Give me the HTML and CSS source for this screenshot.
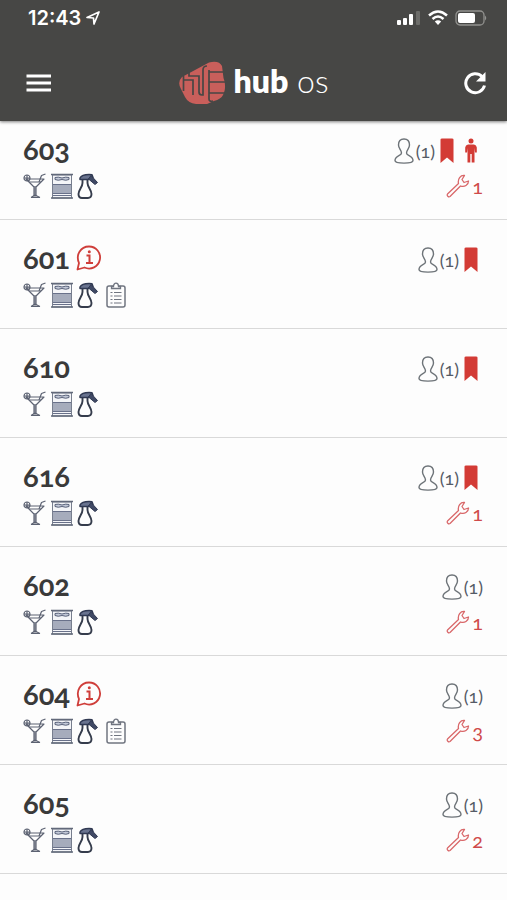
FILE: index.html
```
<!doctype html>
<html lang="en">
  <head>
    <meta charset="UTF-8" />
    <meta name="viewport" content="width=device-width, initial-scale=1" />
    <title>hub os</title>
    <link rel="stylesheet" href="styles.css">
  </head>
  <body>
    <!-- icon set -->
    <svg class="sprite" width="0" height="0" aria-hidden="true">
      <symbol id="i-cocktail" viewBox="0 0 24 26">
        <g fill="none" stroke="#5c6272" stroke-width="1.2" stroke-linejoin="round">
          <path d="M3 6H21L13 14V23H11V14Z" />
          <path d="M6 9H18M12 13V23" />
          <circle cx="4" cy="5" r="3" />
          <path d="M4 2V8M1 5H7M16 9L18.500 2.500L22.500 1M8 24.500H17M12 22L8 24.500M12 22L17 24.500" />
        </g>
      </symbol>
      <symbol id="i-bed" viewBox="0 0 22 26">
        <rect x="1.500" y="2" width="19" height="23" fill="#f4f5f8" stroke="#777e8e" />
        <path d="M0 1.500H22M0 25H22" stroke="#62697a" stroke-width="1.500" />
        <rect x="2" y="12" width="18" height="8" fill="#a6acbc" />
        <path d="M2 11.500H20M2 20.500H20M2 22.500H20" stroke="#69718a" />
        <path d="M4 4.500Q7 3.500 11 5Q15 3.500 18 4.500V6.500Q15 8 11 6.500Q7 8 4 6.500Z" fill="#c3c9d8" stroke="#59627a" />
      </symbol>
      <symbol id="i-spray" viewBox="0 0 22 26">
        <path d="M5.500 6V10C5.500 14 1.500 17 1.500 21C1.500 24 3 25 5 25H11C13 25 14.500 24 14.500 21C14.500 17 10.500 14 10.500 10V6" fill="none" stroke="#353c4c" stroke-width="1.900" />
        <path d="M3 5C4.500 2 8.500 1.200 15 1.700L16 4.500L11 6.500H3Z" fill="#69738f" stroke="#303952" stroke-width="1.500" stroke-linejoin="round" />
        <path d="M14 2.500L20.500 9.500L18 11.500L11.500 6Z" fill="#404965" stroke="#303952" />
      </symbol>
      <symbol id="i-clipboard" viewBox="0 0 20 26">
        <rect x="1" y="4" width="18" height="21" rx="2" fill="none" stroke="#707580" stroke-width="1.500" />
        <path d="M5.500 6.500V4.500H7.500C7.500 0 12.500 0 12.500 4.500H14.500V6.500Z" fill="#fff" stroke="#707580" stroke-width="1.300" />
        <path d="M4.500 10.500H6.500M8 10.500H15.500M4.500 14H6.500M8 14H15.500M4.500 17.500H6.500M8 17.500H15.500M4.500 21H6.500M8 21H15.500" stroke="#707580" stroke-width="1.200" />
      </symbol>
      <symbol id="i-info" viewBox="0 0 26 26">
        <path d="M1.500 24.500L3 18C-0.500 10 4.500 1.500 13 1.500A11 11 0 1 1 8.500 22.500Z" fill="none" stroke="#cf3e3a" stroke-width="1.800" stroke-linejoin="round" />
        <path d="M10.500 10.500H13.500V18M10 18H17" fill="none" stroke="#cf3e3a" stroke-width="2" />
        <circle cx="13.300" cy="6.800" r="1.500" fill="#cf3e3a" />
      </symbol>
      <symbol id="i-guest" viewBox="0 0 20 26">
        <path d="M10 1C6 1 4.500 3.500 4.500 7C4.500 10.500 7.500 12 7.500 15C7.500 18 1 17.500 1 22.500C1 26 19 26 19 22.500C19 17.500 12.500 18 12.500 15C12.500 12 15.500 10.500 15.500 7C15.500 3.500 14 1 10 1Z" fill="none" stroke="#6d7378" stroke-width="1.400" />
      </symbol>
      <symbol id="i-bookmark" viewBox="0 0 14 26">
        <path d="M0.500 1.500Q0.500 0.500 2 0.500H12Q13.500 0.500 13.500 1.500V25L7 19.500L0.500 25Z" fill="#d33b35" />
      </symbol>
      <symbol id="i-man" viewBox="0 0 14 26">
        <circle cx="7" cy="3" r="2.500" fill="#d33b35" />
        <path d="M4 6.500H10Q12.500 7 12.800 9.500V14.500H11L10.500 10V24.500H7.700V16H6.300V24.500H3.500V10L3 14.500H1.200V9.500Q1.500 7 4 6.500Z" fill="#d33b35" />
      </symbol>
      <symbol id="i-wrench" viewBox="0 0 24 24">
        <path d="M1.500 20L12.500 9.500C11.500 5 14.500 1 18.500 1.500L16 5.500L18 8.500L22.500 7C22.500 11 18.500 13.500 14.500 12L4 22.500C2.500 23.500 0.500 21.500 1.500 20Z" fill="none" stroke="#d9686a" stroke-width="1.300" stroke-linejoin="round" />
      </symbol>
    </svg>

    <header class="header">
      <div class="status">
        <span class="time">12:43</span>
        <svg class="location" viewBox="0 0 14 14"><path d="M1 6.500L13 1L8 13L7.500 7Z" fill="none" stroke="#fff" stroke-width="1.700" stroke-linejoin="round" /></svg>
        <div class="signals">
          <svg width="24" height="16" viewBox="0 0 24 16">
            <g fill="#fff"><rect y="10" width="4" height="5" rx="1" /><rect x="6" y="8" width="4" height="7" rx="1" /><rect x="12" y="4" width="4" height="11" rx="1" /></g>
            <rect x="19" y="1" width="4" height="14" rx="1" fill="#6c6c69" />
          </svg>
          <svg width="20" height="16" viewBox="0 0 20 16">
            <path d="M1 5.500Q10-2.500 19 5.500M4.500 9Q10 4 15.500 9" fill="none" stroke="#fff" stroke-width="2.500" />
            <path d="M6.800 11.500Q10 9 13.200 11.500L10 15Z" fill="#fff" />
          </svg>
          <svg width="32" height="16" viewBox="0 0 32 16">
            <rect x="1" y="1" width="28" height="14" rx="4" fill="none" stroke="#92928f" stroke-width="1.300" />
            <rect x="3" y="3" width="17" height="10" rx="2" fill="#fff" />
            <path d="M30 5.500Q32.500 8 30 10.500Z" fill="#92928f" />
          </svg>
        </div>
      </div>

      <div class="toolbar">
        <button class="tool" type="button" aria-label="Menu">
          <svg width="26" height="18" viewBox="0 0 26 18"><path d="M0.500 2H25M0.500 9H25M0.500 16H25" stroke="#fff" stroke-width="2.800" /></svg>
        </button>
        <div class="brand">
          <svg class="logo" width="48" height="44" viewBox="0 0 48 44">
            <path d="M4 16L31 1.500Q41-1 44 5L45.500 17Q48 23 46.500 30L45 34Q43 38 36 40L29 43H18Q10 42 7 36L3 28Q-1 21 4 16Z" fill="#c95f5b" />
            <path d="M5.500 15V30M6 19H15V34M11 11V15H21V31Q21 34 24 34H25V9Q25 5 29 5M31 9V38Q31 41 35 40M31 11H45M31 21H47M31 32H46" fill="none" stroke="#474745" stroke-width="1.700" />
          </svg>
          <span class="brand-name"><b>hub</b> os</span>
        </div>
        <button class="tool" type="button" aria-label="Refresh">
          <svg width="24" height="24" viewBox="0 0 24 24">
            <path d="M21.500 14.500A9.500 9.500 0 1 1 19 5.500" fill="none" stroke="#fff" stroke-width="3" />
            <path d="M22.500 1V10.500H13Z" fill="#fff" />
          </svg>
        </button>
      </div>
    </header>

    <main>
      <ul class="rooms">
        <li class="room">
          <div class="info">
            <h2 class="number">603</h2>
            <div class="tasks">
              <svg width="24" height="26"><use href="#i-cocktail" /></svg>
              <svg width="22" height="26"><use href="#i-bed" /></svg>
              <svg width="22" height="26"><use href="#i-spray" /></svg>
            </div>
          </div>
          <div class="state">
            <div class="guests">
              <svg width="20" height="26"><use href="#i-guest" /></svg><span>(1)</span>
              <svg class="flag" height="26"><use href="#i-bookmark" /></svg>
              <svg class="flag" height="26"><use href="#i-man" /></svg>
            </div>
            <div class="repairs"><svg width="24" height="24"><use href="#i-wrench" /></svg><span>1</span></div>
          </div>
        </li>
        <li class="room">
          <div class="info">
            <h2 class="number">601 <svg width="26" height="26"><use href="#i-info" /></svg></h2>
            <div class="tasks">
              <svg width="24" height="26"><use href="#i-cocktail" /></svg>
              <svg width="22" height="26"><use href="#i-bed" /></svg>
              <svg width="22" height="26"><use href="#i-spray" /></svg>
              <svg width="20" height="26"><use href="#i-clipboard" /></svg>
            </div>
          </div>
          <div class="state">
            <div class="guests">
              <svg width="20" height="26"><use href="#i-guest" /></svg><span>(1)</span>
              <svg class="flag" height="26"><use href="#i-bookmark" /></svg>
            </div>
          </div>
        </li>
        <li class="room">
          <div class="info">
            <h2 class="number">610</h2>
            <div class="tasks">
              <svg width="24" height="26"><use href="#i-cocktail" /></svg>
              <svg width="22" height="26"><use href="#i-bed" /></svg>
              <svg width="22" height="26"><use href="#i-spray" /></svg>
            </div>
          </div>
          <div class="state">
            <div class="guests">
              <svg width="20" height="26"><use href="#i-guest" /></svg><span>(1)</span>
              <svg class="flag" height="26"><use href="#i-bookmark" /></svg>
            </div>
          </div>
        </li>
        <li class="room">
          <div class="info">
            <h2 class="number">616</h2>
            <div class="tasks">
              <svg width="24" height="26"><use href="#i-cocktail" /></svg>
              <svg width="22" height="26"><use href="#i-bed" /></svg>
              <svg width="22" height="26"><use href="#i-spray" /></svg>
            </div>
          </div>
          <div class="state">
            <div class="guests">
              <svg width="20" height="26"><use href="#i-guest" /></svg><span>(1)</span>
              <svg class="flag" height="26"><use href="#i-bookmark" /></svg>
            </div>
            <div class="repairs"><svg width="24" height="24"><use href="#i-wrench" /></svg><span>1</span></div>
          </div>
        </li>
        <li class="room">
          <div class="info">
            <h2 class="number">602</h2>
            <div class="tasks">
              <svg width="24" height="26"><use href="#i-cocktail" /></svg>
              <svg width="22" height="26"><use href="#i-bed" /></svg>
              <svg width="22" height="26"><use href="#i-spray" /></svg>
            </div>
          </div>
          <div class="state">
            <div class="guests">
              <svg width="20" height="26"><use href="#i-guest" /></svg><span>(1)</span>
            </div>
            <div class="repairs"><svg width="24" height="24"><use href="#i-wrench" /></svg><span>1</span></div>
          </div>
        </li>
        <li class="room">
          <div class="info">
            <h2 class="number">604 <svg width="26" height="26"><use href="#i-info" /></svg></h2>
            <div class="tasks">
              <svg width="24" height="26"><use href="#i-cocktail" /></svg>
              <svg width="22" height="26"><use href="#i-bed" /></svg>
              <svg width="22" height="26"><use href="#i-spray" /></svg>
              <svg width="20" height="26"><use href="#i-clipboard" /></svg>
            </div>
          </div>
          <div class="state">
            <div class="guests">
              <svg width="20" height="26"><use href="#i-guest" /></svg><span>(1)</span>
            </div>
            <div class="repairs"><svg width="24" height="24"><use href="#i-wrench" /></svg><span>3</span></div>
          </div>
        </li>
        <li class="room">
          <div class="info">
            <h2 class="number">605</h2>
            <div class="tasks">
              <svg width="24" height="26"><use href="#i-cocktail" /></svg>
              <svg width="22" height="26"><use href="#i-bed" /></svg>
              <svg width="22" height="26"><use href="#i-spray" /></svg>
            </div>
          </div>
          <div class="state">
            <div class="guests">
              <svg width="20" height="26"><use href="#i-guest" /></svg><span>(1)</span>
            </div>
            <div class="repairs"><svg width="24" height="24"><use href="#i-wrench" /></svg><span>2</span></div>
          </div>
        </li>
      </ul>
    </main>
  </body>
</html>
```
FILE: styles.css
```
* {
  box-sizing: border-box;
}
body {
  margin: 0;
  background-color: #fdfdfd;
  color: #3a3a3a;
  font-family: Lato, sans-serif;
  font-variant-numeric: oldstyle-nums;
}
svg {
  display: block;
  flex: none;
}
.sprite {
  display: none;
}

/* header */
.header {
  background-color: #474745;
  color: #fff;
  padding: 8px 20px 16px;
  box-shadow: 0 1px 3px rgba(0, 0, 0, 0.5);
}
.status {
  display: flex;
  align-items: center;
  height: 20px;
  padding-left: 8px;
}
.time {
  font: 600 20px/20px Inter, sans-serif;
}
.location {
  width: 14px;
  height: 14px;
  margin-left: 5px;
}
.signals {
  display: flex;
  gap: 7px;
  margin-left: auto;
}
.toolbar {
  display: flex;
  align-items: center;
  justify-content: space-between;
  margin-top: 33px;
  height: 44px;
}
.tool {
  display: flex;
  width: 36px;
  padding: 6px 0 6px 6px;
  border: none;
  background: none;
  cursor: pointer;
}
.tool:last-child {
  justify-content: flex-end;
}
.brand {
  display: flex;
  align-items: center;
  gap: 7px;
}
.brand-name {
  font-size: 32px;
  font-weight: 300;
  line-height: 40px;
  padding-bottom: 4px;
}
.brand-name b {
  font-weight: 800;
}

/* room list */
.rooms {
  list-style: none;
  margin: 0;
  padding: 0;
}
.room {
  display: flex;
  justify-content: space-between;
  padding: 25px 24px 20px 23px;
  border-bottom: 1px solid #d9d9d9;
}
.room:first-child {
  padding-top: 15px;
}
.number {
  display: flex;
  align-items: center;
  gap: 6px;
  margin: 0;
  height: 26px;
  font-size: 29px;
  font-weight: 700;
  line-height: 24px;
}
.tasks {
  display: flex;
  gap: 4px;
  margin-top: 11px;
}
.tasks svg:nth-child(4) {
  margin-left: 3px;
}
.state {
  display: flex;
  flex-direction: column;
  align-items: flex-end;
  gap: 10px;
  padding-top: 2px;
}
.guests {
  display: flex;
  align-items: center;
  color: #555b66;
  font-size: 18px;
  line-height: 24px;
}
.guests span {
  margin-left: 2px;
}
.flag {
  width: 24px;
}
.repairs {
  display: flex;
  align-items: center;
  gap: 2px;
  color: #cf4a4a;
  font-size: 20px;
  line-height: 24px;
}
```
